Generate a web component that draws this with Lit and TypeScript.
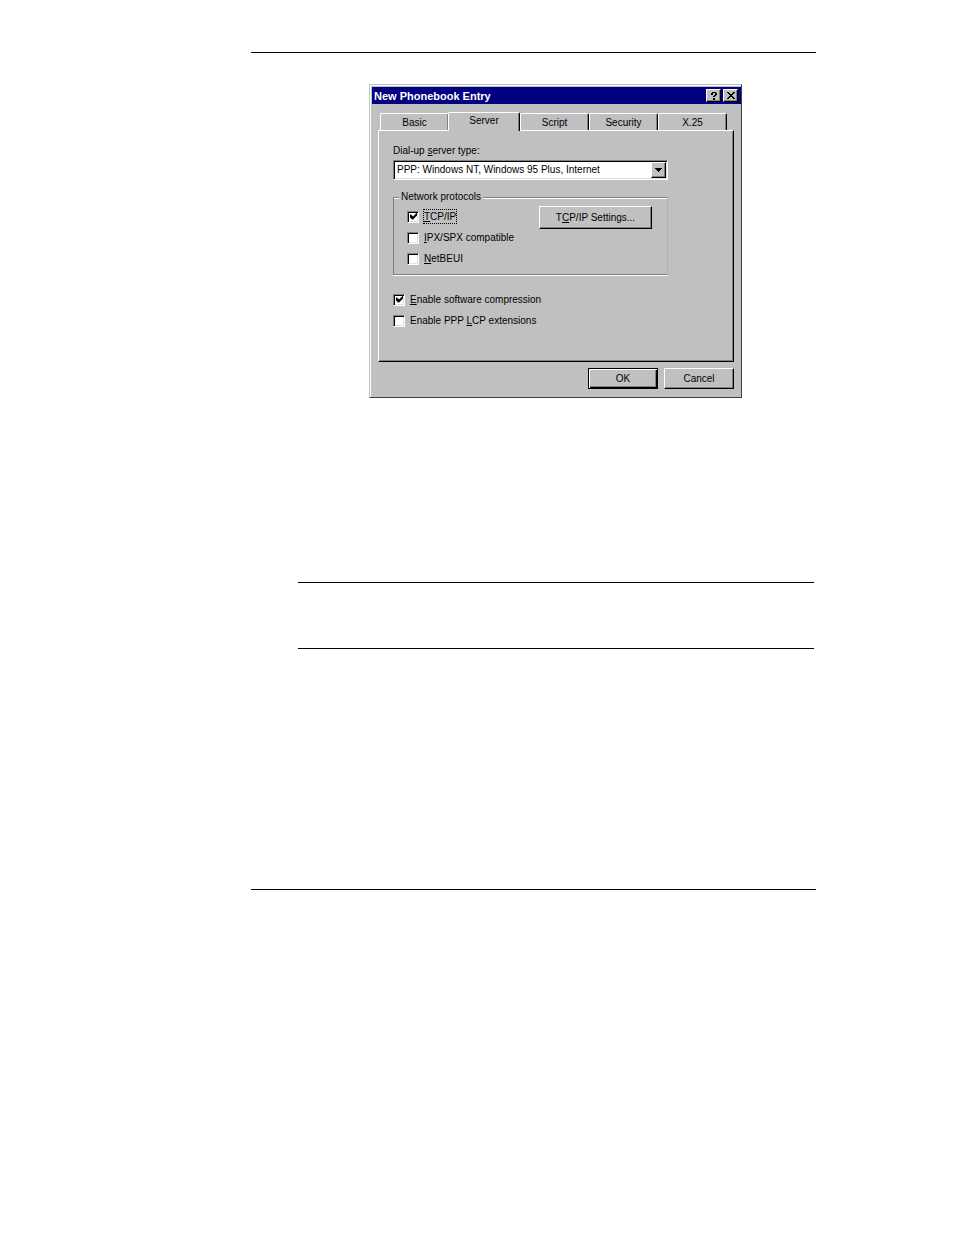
import { LitElement, html, css, svg } from 'lit'
import { customElement, property, state } from 'lit/decorators.js'

@customElement('tick-box')
export class TickBox extends LitElement {
  @property({type: Boolean})
  checked = false;

  @property({type: Boolean})
  marked = false;

  @property({type: String})
  before = '';

  @property({type: String})
  key = '';

  @property({type: String})
  after = '';

  render() {
    return html`
      <label class="row">
        <input class="box" type="checkbox" .checked=${this.checked}>
        <span class="text ${this.marked ? 'marked' : ''}">${this.before}<u>${this.key}</u>${this.after}</span>
      </label>
    `
  }

  static styles = css`
    :host {
      display: block;
    }

    .row {
      display: flex;
      align-items: center;
      gap: 4px;
      height: 21px;
    }

    .box {
      appearance: none;
      box-sizing: border-box;
      width: 12px;
      height: 12px;
      margin: 0;
      background: #fff;
      border: 1px solid;
      border-color: #808080 #fff #fff #808080;
      box-shadow: inset 1px 1px #000, inset -1px -1px #dfdfdf;
      outline: none;
    }

    .box:checked::before {
      content: '';
      display: block;
      width: 7px;
      height: 7px;
      margin: 1px 0 0 2px;
      background: #000;
      clip-path: polygon(0 2px, 1px 2px, 3px 4px, 7px 0, 7px 3px, 3px 7px, 2px 7px, 0 5px);
    }

    .text {
      border: 1px dotted transparent;
      line-height: 13px;
      white-space: nowrap;
    }

    .marked {
      border-color: #000;
    }
  `
}

@customElement('app-root')
export class PhonebookPage extends LitElement {
  @state()
  tab = 'Server';

  tabs = ['Basic', 'Server', 'Script', 'Security', 'X.25'];

  render() {
    return html`
      <main class="page">
        <hr class="rule">
        <section class="dialog" role="dialog" aria-labelledby="title">
          <header class="title-bar">
            <h1 class="title" id="title">New Phonebook Entry</h1>
            <button class="caption" aria-label="Help">
              ${this.icon(svg`<path d="M2 0h4v1h-4zM1 1h2v2h-2zM5 1h2v2h-2zM4 3h2v1h-2zM3 4h2v1h-2zM3 6h2v2h-2z"/>`)}
            </button>
            <button class="caption" aria-label="Close">
              ${this.icon(svg`<path d="M0 0h2v1h1v1h2v-1h1v-1h2v1h-1v1h-1v1h-1v1h1v1h1v1h1v1h-2v-1h-1v-1h-2v1h-1v1h-2v-1h1v-1h1v-1h1v-1h-1v-1h-1v-1h-1z"/>`)}
            </button>
          </header>
          <div class="tabs" role="tablist">
            ${this.tabs.map(name => html`
              <button
                class="tab"
                role="tab"
                aria-selected=${this.tab === name ? 'true' : 'false'}
                @click=${() => this.tab = name}
              >${name}</button>
            `)}
          </div>
          <div class="panel" role="tabpanel">
            <label class="label" for="server">Dial-up <u>s</u>erver type:</label>
            <div class="drop">
              <select class="select" id="server">
                <option>PPP: Windows NT, Windows 95 Plus, Internet</option>
              </select>
              <span class="arrow">
                <svg width="7" height="4" viewBox="0 0 7 4" shape-rendering="crispEdges"><path d="M0 0h7v1h-1v1h-1v1h-1v1h-1v-1h-1v-1h-1v-1h-1z"/></svg>
              </span>
            </div>
            <fieldset class="group">
              <legend class="legend">Network protocols</legend>
              <div>
                <tick-box checked marked key="T" after="CP/IP"></tick-box>
                <tick-box key="I" after="PX/SPX compatible"></tick-box>
                <tick-box key="N" after="etBEUI"></tick-box>
              </div>
              <button class="button settings">T<u>C</u>P/IP Settings...</button>
            </fieldset>
            <tick-box checked key="E" after="nable software compression"></tick-box>
            <tick-box before="Enable PPP " key="L" after="CP extensions"></tick-box>
          </div>
          <footer class="footer">
            <button class="button default">OK</button>
            <button class="button">Cancel</button>
          </footer>
        </section>
        <div class="note"></div>
        <hr class="rule">
      </main>
    `
  }

  private icon(shape: unknown) {
    return html`<svg width="8" height="8" viewBox="0 0 8 8" shape-rendering="crispEdges">${shape}</svg>`
  }

  static styles = css`
    :host {
      display: block;
      background: #fff;
      color: #000;
      font: 10px/14px 'Liberation Sans', Arial, sans-serif;
    }

    .page {
      padding: 52px 138px 52px 251px;
    }

    .rule {
      height: 1px;
      margin: 0;
      border: none;
      background: #000;
    }

    .dialog {
      margin: 31px 74px 184px 118px;
      padding: 1px 0 8px 1px;
      background: #c0c0c0;
      border: 1px solid;
      border-color: #c0c0c0 #404040 #404040 #c0c0c0;
      box-shadow: inset 1px 1px #fff;
    }

    .title-bar {
      display: flex;
      align-items: center;
      height: 17px;
      margin: 1px 0 0 1px;
      padding: 0 3px 0 2px;
      background: #000080;
    }

    .title {
      flex: 1;
      margin: 0;
      color: #fff;
      font-size: 11px;
      font-weight: bold;
    }

    .caption {
      display: flex;
      align-items: center;
      justify-content: center;
      box-sizing: border-box;
      width: 15px;
      height: 13px;
      margin: 0 0 0 2px;
      padding: 0;
      background: #c0c0c0;
      border: 1px solid;
      border-color: #fff #000 #000 #fff;
      box-shadow: inset -1px -1px #808080;
    }

    .tabs {
      display: flex;
      align-items: flex-end;
      height: 18px;
      margin: 8px 14px 0 9px;
    }

    .tab {
      flex: 1;
      height: 17px;
      padding: 1px 0 0;
      background: #c0c0c0;
      border: 1px solid;
      border-color: #fff #000 transparent #fff;
      border-bottom: none;
      border-radius: 2px 2px 0 0;
      box-shadow: inset -1px 0 #808080;
      color: inherit;
      font: inherit;
    }

    .tab[aria-selected='true'] {
      flex: 0 0 72px;
      z-index: 1;
      height: 19px;
      margin: 0 0 -1px -1px;
      padding: 0 0 2px;
    }

    .panel {
      margin: 0 7px;
      padding: 13px 65px 30px 14px;
      border: 1px solid;
      border-color: #fff #000 #000 #fff;
      box-shadow: inset -1px -1px #808080;
    }

    .label {
      display: block;
      padding-bottom: 2px;
    }

    .drop {
      display: flex;
      position: relative;
      margin-bottom: 10px;
    }

    .select {
      appearance: none;
      flex: 1;
      height: 20px;
      padding: 0 20px 0 3px;
      background: #fff;
      border: 1px solid;
      border-color: #808080 #fff #fff #808080;
      border-radius: 0;
      box-shadow: inset 1px 1px #000, inset -1px -1px #dfdfdf;
      color: inherit;
      font: inherit;
    }

    .arrow {
      display: flex;
      align-items: center;
      justify-content: center;
      box-sizing: border-box;
      position: absolute;
      top: 2px;
      right: 2px;
      width: 15px;
      height: 16px;
      background: #c0c0c0;
      border: 1px solid;
      border-color: #fff #000 #000 #fff;
      box-shadow: inset -1px -1px #808080;
      pointer-events: none;
    }

    .group {
      display: flex;
      align-items: flex-start;
      justify-content: space-between;
      margin: 0 0 14px;
      padding: 2px 15px 5px 13px;
      border: 1px solid #808080;
      border-right-color: #b0b0b0;
      box-shadow: inset 0 1px #fff, 0 1px #fff;
    }

    .legend {
      padding: 0 2px;
      margin-left: -8px;
      background: #c0c0c0;
    }

    .button {
      box-sizing: border-box;
      width: 70px;
      height: 21px;
      padding: 0;
      background: #c0c0c0;
      border: 1px solid;
      border-color: #fff #000 #000 #fff;
      box-shadow: inset -1px -1px #808080;
      color: inherit;
      font: inherit;
    }

    .settings {
      width: 113px;
      height: 23px;
    }

    .default {
      border-color: #000;
      box-shadow: inset 1px 1px #fff, inset -1px -1px #000, inset -2px -2px #808080;
    }

    .footer {
      display: flex;
      justify-content: flex-end;
      gap: 6px;
      padding: 6px 7px 0 0;
    }

    .note {
      height: 65px;
      margin: 0 2px 240px 47px;
      border: 1px solid #000;
      border-width: 1px 0;
    }
  `
}

declare global {
  interface HTMLElementTagNameMap {
    'app-root': PhonebookPage
    'tick-box': TickBox
  }
}
